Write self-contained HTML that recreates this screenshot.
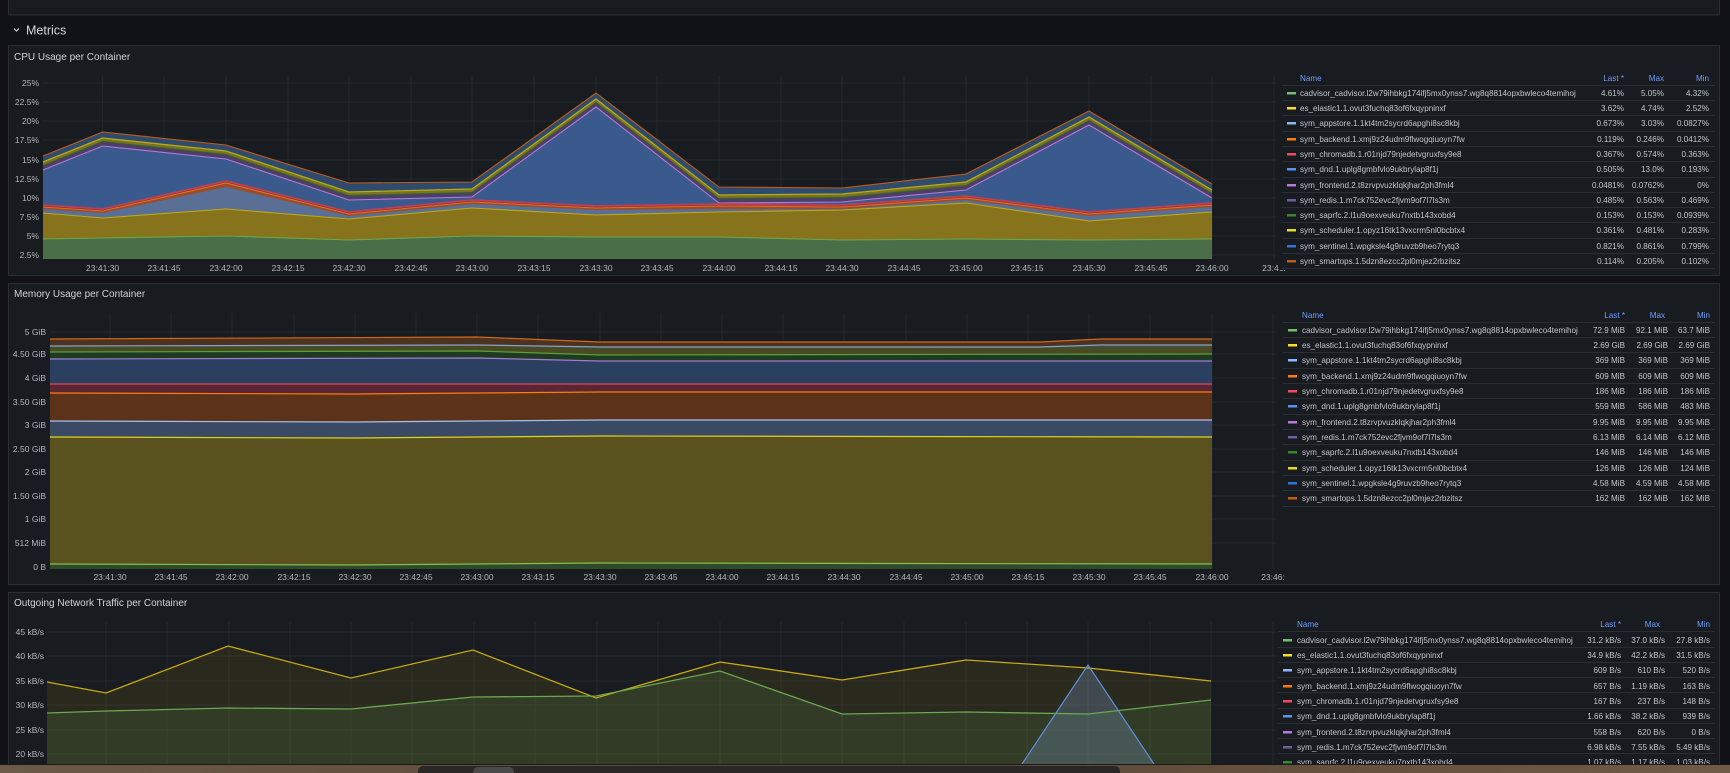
<!DOCTYPE html>
<html><head><meta charset="utf-8"><style>
html,body{margin:0;padding:0;background:#111217;overflow:hidden}
svg{display:block;font-family:"Liberation Sans",sans-serif}
.ax{font-size:8.5px;fill:#b4b6bd}
.lg{font-size:8.1px;fill:#c4c5cd}
.hd{font-size:8.1px;fill:#6e9fff}
.ti{font-size:10px;fill:#d0d1d8}
.g{stroke:#25282e;stroke-width:1}
.sep{stroke:#2a2d33;stroke-width:1}
</style></head><body>
<svg width="1730" height="773" viewBox="0 0 1730 773">
<rect width="1730" height="773" fill="#111217"/>
<rect x="8.5" y="-3" width="1711" height="18" fill="#181b1f" stroke="#2a2d33"/>
<path d="M14 28.5 L16.5 31 L19 28.5" fill="none" stroke="#c9cad2" stroke-width="1.2"/>
<text x="26" y="34.5" style="font-size:12.5px;fill:#d6d7de">Metrics</text>

<rect x="8.5" y="45.5" width="1711" height="230" fill="#181b1f" stroke="#2a2d33"/>
<text class="ti" x="14" y="60">CPU Usage per Container</text>
<g class="g">
<line x1="43" y1="83" x2="1276" y2="83"/><line x1="43" y1="102" x2="1276" y2="102"/><line x1="43" y1="121" x2="1276" y2="121"/><line x1="43" y1="140" x2="1276" y2="140"/><line x1="43" y1="160" x2="1276" y2="160"/><line x1="43" y1="179" x2="1276" y2="179"/><line x1="43" y1="198" x2="1276" y2="198"/><line x1="43" y1="217" x2="1276" y2="217"/><line x1="43" y1="236" x2="1276" y2="236"/><line x1="43" y1="255" x2="1276" y2="255"/>
<line x1="102.6" y1="76" x2="102.6" y2="259"/><line x1="164" y1="76" x2="164" y2="259"/><line x1="226" y1="76" x2="226" y2="259"/><line x1="288" y1="76" x2="288" y2="259"/><line x1="349" y1="76" x2="349" y2="259"/><line x1="411" y1="76" x2="411" y2="259"/><line x1="472" y1="76" x2="472" y2="259"/><line x1="534" y1="76" x2="534" y2="259"/><line x1="596" y1="76" x2="596" y2="259"/><line x1="657" y1="76" x2="657" y2="259"/><line x1="719" y1="76" x2="719" y2="259"/><line x1="781" y1="76" x2="781" y2="259"/><line x1="842" y1="76" x2="842" y2="259"/><line x1="904" y1="76" x2="904" y2="259"/><line x1="966" y1="76" x2="966" y2="259"/><line x1="1027" y1="76" x2="1027" y2="259"/><line x1="1089" y1="76" x2="1089" y2="259"/><line x1="1151" y1="76" x2="1151" y2="259"/><line x1="1212" y1="76" x2="1212" y2="259"/><line x1="1274" y1="76" x2="1274" y2="259"/>
</g>
<g>
<polygon fill="#2e4b6e" points="43,156 102.6,132 226,145 349,183 472,182 596,93 719,187 842,188 966,174 1089,111 1212,184 1212,259 43,259"/>
<polygon fill="#77731e" points="43,162 102.6,138 226,151 349,192 472,189 596,99 719,195 842,194 966,182 1089,117 1212,190 1212,259 43,259"/>
<polygon fill="#3b5e2c" points="43,165 102.6,141 226,154 349,195 472,192 596,102 719,198 842,197 966,185 1089,120 1212,193 1212,259 43,259"/>
<polygon fill="#4a3f68" points="43,166 102.6,142 226,155 349,196 472,193 596,103 719,199 842,198 966,186 1089,121 1212,194 1212,259 43,259"/>
<polygon fill="#3a5a8d" points="43,170 102.6,146 226,159 349,200 472,197 596,107 719,203 842,202 966,190 1089,125 1212,198 1212,259 43,259"/>
<polygon fill="#8a2d3b" points="43,205 102.6,209 226,181 349,212 472,200 596,206 719,204 842,205 966,196 1089,212 1212,203 1212,259 43,259"/>
<polygon fill="#9a4d2a" points="43,207 102.6,211 226,183 349,214 472,202 596,208 719,206 842,207 966,198 1089,214 1212,205 1212,259 43,259"/>
<polygon fill="#5a6f95" points="43,209 102.6,213 226,187 349,216 472,204 596,210 719,209 842,209 966,200 1089,216 1212,207 1212,259 43,259"/>
<polygon fill="#86731c" points="43,213 102.6,218 226,209 349,219 472,208 596,215 719,212 842,210 966,203 1089,221 1212,212 1212,259 43,259"/>
<polygon fill="#4a6e48" points="43,239 102.6,238 226,236 349,240 472,236 596,237 719,237 842,240 966,239 1089,240 1212,239 1212,259 43,259"/>
<g fill="none" stroke-width="1.1">
<polyline stroke="#c15c17" points="43,156 102.6,132 226,145 349,183 472,182 596,93 719,187 842,188 966,174 1089,111 1212,184"/>
<polyline stroke="#b8a91e" stroke-width="1.3" points="43,162 102.6,138 226,151 349,192 472,189 596,99 719,195 842,194 966,182 1089,117 1212,190"/>
<polyline stroke="#b877d9" points="43,170 102.6,146 226,159 349,200 472,197 596,107 719,203 842,202 966,190 1089,125 1212,198"/>
<polyline stroke="#c04050" stroke-width="1.8" points="43,205 102.6,209 226,181 349,212 472,200 596,206 719,204 842,205 966,196 1089,212 1212,203"/>
<polyline stroke="#e07020" points="43,207 102.6,211 226,183 349,214 472,202 596,208 719,206 842,207 966,198 1089,214 1212,205"/>
<polyline stroke="#c0a818" points="43,213 102.6,218 226,209 349,219 472,208 596,215 719,212 842,210 966,203 1089,221 1212,212"/>
<polyline stroke="#6aa84f" points="43,239 102.6,238 226,236 349,240 472,236 596,237 719,237 842,240 966,239 1089,240 1212,239"/>
</g></g>
<g class="ax" text-anchor="end">
<text x="39" y="86">25%</text><text x="39" y="105">22.5%</text><text x="39" y="124">20%</text><text x="39" y="143">17.5%</text><text x="39" y="163">15%</text><text x="39" y="182">12.5%</text><text x="39" y="201">10%</text><text x="39" y="220">7.5%</text><text x="39" y="239">5%</text><text x="39" y="258">2.5%</text>
</g>
<g class="ax" text-anchor="middle">
<text x="102.6" y="271">23:41:30</text><text x="164" y="271">23:41:45</text><text x="226" y="271">23:42:00</text><text x="288" y="271">23:42:15</text><text x="349" y="271">23:42:30</text><text x="411" y="271">23:42:45</text><text x="472" y="271">23:43:00</text><text x="534" y="271">23:43:15</text><text x="596" y="271">23:43:30</text><text x="657" y="271">23:43:45</text><text x="719" y="271">23:44:00</text><text x="781" y="271">23:44:15</text><text x="842" y="271">23:44:30</text><text x="904" y="271">23:44:45</text><text x="966" y="271">23:45:00</text><text x="1027" y="271">23:45:15</text><text x="1089" y="271">23:45:30</text><text x="1151" y="271">23:45:45</text><text x="1212" y="271">23:46:00</text><text x="1274" y="271">23:46:</text>
</g>
<rect x="1279" y="70" width="438" height="200" fill="#181b1f"/>
<g>
<text class="hd" x="1300" y="81">Name</text>
<g class="hd" text-anchor="end"><text x="1624" y="81">Last *</text><text x="1664" y="81">Max</text><text x="1709" y="81">Min</text></g>
<g class="sep"><line x1="1282" y1="85.5" x2="1715" y2="85.5"/><line x1="1282" y1="100.5" x2="1715" y2="100.5"/><line x1="1282" y1="115.5" x2="1715" y2="115.5"/><line x1="1282" y1="131.5" x2="1715" y2="131.5"/><line x1="1282" y1="146.5" x2="1715" y2="146.5"/><line x1="1282" y1="161.5" x2="1715" y2="161.5"/><line x1="1282" y1="177.5" x2="1715" y2="177.5"/><line x1="1282" y1="192.5" x2="1715" y2="192.5"/><line x1="1282" y1="207.5" x2="1715" y2="207.5"/><line x1="1282" y1="222.5" x2="1715" y2="222.5"/><line x1="1282" y1="238.5" x2="1715" y2="238.5"/><line x1="1282" y1="253.5" x2="1715" y2="253.5"/><line x1="1282" y1="268.5" x2="1715" y2="268.5"/></g>
<g>
<rect x="1287" y="92" width="9" height="2.5" fill="#73bf69"/><rect x="1287" y="107" width="9" height="2.5" fill="#fade2a"/><rect x="1287" y="122" width="9" height="2.5" fill="#8ab8ff"/><rect x="1287" y="138" width="9" height="2.5" fill="#ff780a"/><rect x="1287" y="153" width="9" height="2.5" fill="#f2495c"/><rect x="1287" y="168" width="9" height="2.5" fill="#5794f2"/><rect x="1287" y="184" width="9" height="2.5" fill="#b877d9"/><rect x="1287" y="199" width="9" height="2.5" fill="#705da0"/><rect x="1287" y="214" width="9" height="2.5" fill="#37872d"/><rect x="1287" y="229" width="9" height="2.5" fill="#e8dc22"/><rect x="1287" y="245" width="9" height="2.5" fill="#3274d9"/><rect x="1287" y="260" width="9" height="2.5" fill="#c15c17"/>
</g>
<g class="lg">
<text x="1300" y="96">cadvisor_cadvisor.l2w79ihbkg174ifj5mx0ynss7.wg8q8814opxbwleco4temihoj</text>
<text x="1300" y="111">es_elastic1.1.ovut3fuchq83of6fxqypninxf</text>
<text x="1300" y="126">sym_appstore.1.1kt4tm2sycrd6apghi8sc8kbj</text>
<text x="1300" y="142">sym_backend.1.xmj9z24udm9flwogqiuoyn7fw</text>
<text x="1300" y="157">sym_chromadb.1.r01njd79njedetvgruxfsy9e8</text>
<text x="1300" y="172">sym_dnd.1.uplg8gmbfvlo9ukbrylap8f1j</text>
<text x="1300" y="188">sym_frontend.2.t8zrvpvuzklqkjhar2ph3fml4</text>
<text x="1300" y="203">sym_redis.1.m7ck752evc2fjvm9of7l7ls3m</text>
<text x="1300" y="218">sym_saprfc.2.l1u9oexveuku7nxtb143xobd4</text>
<text x="1300" y="233">sym_scheduler.1.opyz16tk13vxcrm5nl0bcbtx4</text>
<text x="1300" y="249">sym_sentinel.1.wpgksle4g9ruvzb9heo7rytq3</text>
<text x="1300" y="264">sym_smartops.1.5dzn8ezcc2pl0mjez2rbzitsz</text>
</g>
<g class="lg" text-anchor="end">
<text x="1624" y="96">4.61%</text><text x="1664" y="96">5.05%</text><text x="1709" y="96">4.32%</text>
<text x="1624" y="111">3.62%</text><text x="1664" y="111">4.74%</text><text x="1709" y="111">2.52%</text>
<text x="1624" y="126">0.673%</text><text x="1664" y="126">3.03%</text><text x="1709" y="126">0.0827%</text>
<text x="1624" y="142">0.119%</text><text x="1664" y="142">0.246%</text><text x="1709" y="142">0.0412%</text>
<text x="1624" y="157">0.367%</text><text x="1664" y="157">0.574%</text><text x="1709" y="157">0.363%</text>
<text x="1624" y="172">0.505%</text><text x="1664" y="172">13.0%</text><text x="1709" y="172">0.193%</text>
<text x="1624" y="188">0.0481%</text><text x="1664" y="188">0.0762%</text><text x="1709" y="188">0%</text>
<text x="1624" y="203">0.485%</text><text x="1664" y="203">0.563%</text><text x="1709" y="203">0.469%</text>
<text x="1624" y="218">0.153%</text><text x="1664" y="218">0.153%</text><text x="1709" y="218">0.0939%</text>
<text x="1624" y="233">0.361%</text><text x="1664" y="233">0.481%</text><text x="1709" y="233">0.283%</text>
<text x="1624" y="249">0.821%</text><text x="1664" y="249">0.861%</text><text x="1709" y="249">0.799%</text>
<text x="1624" y="264">0.114%</text><text x="1664" y="264">0.205%</text><text x="1709" y="264">0.102%</text>
</g>
</g>

<rect x="8.5" y="283.5" width="1711" height="301" fill="#181b1f" stroke="#2a2d33"/>
<text class="ti" x="14" y="297">Memory Usage per Container</text>
<g class="g">
<line x1="50" y1="332" x2="1276" y2="332"/><line x1="50" y1="354" x2="1276" y2="354"/><line x1="50" y1="378" x2="1276" y2="378"/><line x1="50" y1="402" x2="1276" y2="402"/><line x1="50" y1="425" x2="1276" y2="425"/><line x1="50" y1="449" x2="1276" y2="449"/><line x1="50" y1="472" x2="1276" y2="472"/><line x1="50" y1="496" x2="1276" y2="496"/><line x1="50" y1="519" x2="1276" y2="519"/><line x1="50" y1="543" x2="1276" y2="543"/>
<line x1="110" y1="313" x2="110" y2="569"/><line x1="171" y1="313" x2="171" y2="569"/><line x1="232" y1="313" x2="232" y2="569"/><line x1="294" y1="313" x2="294" y2="569"/><line x1="355" y1="313" x2="355" y2="569"/><line x1="416" y1="313" x2="416" y2="569"/><line x1="477" y1="313" x2="477" y2="569"/><line x1="538" y1="313" x2="538" y2="569"/><line x1="600" y1="313" x2="600" y2="569"/><line x1="661" y1="313" x2="661" y2="569"/><line x1="722" y1="313" x2="722" y2="569"/><line x1="783" y1="313" x2="783" y2="569"/><line x1="844" y1="313" x2="844" y2="569"/><line x1="906" y1="313" x2="906" y2="569"/><line x1="967" y1="313" x2="967" y2="569"/><line x1="1028" y1="313" x2="1028" y2="569"/><line x1="1089" y1="313" x2="1089" y2="569"/><line x1="1150" y1="313" x2="1150" y2="569"/><line x1="1212" y1="313" x2="1212" y2="569"/><line x1="1273" y1="313" x2="1273" y2="569"/>
</g>
<g>
<polygon fill="#4e3220" points="50,339 477,337 600,342 1040,342 1100,339 1212,339 1212,569 50,569"/>
<polygon fill="#3c4e3e" points="50,346 477,345 600,347 1040,347 1100,345 1212,345 1212,569 50,569"/>
<polygon fill="#4a4a22" points="50,348 477,346 600,349 1212,348 1212,569 50,569"/>
<polygon fill="#1f3a22" points="50,352 477,351 600,355 1212,354 1212,569 50,569"/>
<polygon fill="#2b3f60" points="50,359 477,358 600,361 1212,361 1212,569 50,569"/>
<polygon fill="#5a2633" points="50,384 477,384 600,384 1212,384 1212,569 50,569"/>
<polygon fill="#5c3218" points="50,393 355,394 477,393 600,392 1212,392 1212,569 50,569"/>
<polygon fill="#3a4a64" points="50,421 355,422 477,421 600,420 1212,420 1212,569 50,569"/>
<polygon fill="#5a521e" points="50,437 355,438 477,437 600,436 1212,437 1212,569 50,569"/>
<polygon fill="#2f4a2a" points="50,564 355,565 477,564 600,563 1212,564 1212,569 50,569"/>
<g fill="none" stroke-width="1.2">
<polyline stroke="#d0681c" points="50,339 477,337 600,342 1040,342 1100,339 1212,339"/>
<polyline stroke="#8aa0c0" points="50,346 477,345 600,347 1040,347 1100,345 1212,345"/>
<polyline stroke="#5aa03a" points="50,352 477,351 600,355 1212,354"/>
<polyline stroke="#a27ad0" points="50,359 477,358 600,361 1212,361"/>
<polyline stroke="#e0485a" points="50,384 477,384 600,384 1212,384"/>
<polyline stroke="#ff7a10" points="50,393 355,394 477,393 600,392 1212,392"/>
<polyline stroke="#a8c0e8" points="50,421 355,422 477,421 600,420 1212,420"/>
<polyline stroke="#e0d020" points="50,437 355,438 477,437 600,436 1212,437"/>
<polyline stroke="#80c050" points="50,564 355,565 477,564 600,563 1212,564"/>
</g></g>
<g class="ax" text-anchor="end">
<text x="46" y="335">5 GiB</text><text x="46" y="357">4.50 GiB</text><text x="46" y="381">4 GiB</text><text x="46" y="405">3.50 GiB</text><text x="46" y="428">3 GiB</text><text x="46" y="452">2.50 GiB</text><text x="46" y="475">2 GiB</text><text x="46" y="499">1.50 GiB</text><text x="46" y="522">1 GiB</text><text x="46" y="546">512 MiB</text><text x="46" y="570">0 B</text>
</g>
<g class="ax" text-anchor="middle">
<text x="110" y="580">23:41:30</text><text x="171" y="580">23:41:45</text><text x="232" y="580">23:42:00</text><text x="294" y="580">23:42:15</text><text x="355" y="580">23:42:30</text><text x="416" y="580">23:42:45</text><text x="477" y="580">23:43:00</text><text x="538" y="580">23:43:15</text><text x="600" y="580">23:43:30</text><text x="661" y="580">23:43:45</text><text x="722" y="580">23:44:00</text><text x="783" y="580">23:44:15</text><text x="844" y="580">23:44:30</text><text x="906" y="580">23:44:45</text><text x="967" y="580">23:45:00</text><text x="1028" y="580">23:45:15</text><text x="1089" y="580">23:45:30</text><text x="1150" y="580">23:45:45</text><text x="1212" y="580">23:46:00</text><text x="1273" y="580">23:46:</text>
</g>
<rect x="1281" y="305" width="436" height="210" fill="#181b1f"/>
<g>
<text class="hd" x="1302" y="318">Name</text>
<g class="hd" text-anchor="end"><text x="1625" y="318">Last *</text><text x="1665" y="318">Max</text><text x="1710" y="318">Min</text></g>
<g class="sep"><line x1="1283" y1="322.5" x2="1715" y2="322.5"/><line x1="1283" y1="337.5" x2="1715" y2="337.5"/><line x1="1283" y1="352.5" x2="1715" y2="352.5"/><line x1="1283" y1="368.5" x2="1715" y2="368.5"/><line x1="1283" y1="383.5" x2="1715" y2="383.5"/><line x1="1283" y1="398.5" x2="1715" y2="398.5"/><line x1="1283" y1="414.5" x2="1715" y2="414.5"/><line x1="1283" y1="429.5" x2="1715" y2="429.5"/><line x1="1283" y1="444.5" x2="1715" y2="444.5"/><line x1="1283" y1="460.5" x2="1715" y2="460.5"/><line x1="1283" y1="475.5" x2="1715" y2="475.5"/><line x1="1283" y1="490.5" x2="1715" y2="490.5"/><line x1="1283" y1="506.5" x2="1715" y2="506.5"/></g>
<g>
<rect x="1288" y="329" width="9" height="2.5" fill="#73bf69"/><rect x="1288" y="344" width="9" height="2.5" fill="#fade2a"/><rect x="1288" y="359" width="9" height="2.5" fill="#8ab8ff"/><rect x="1288" y="375" width="9" height="2.5" fill="#ff780a"/><rect x="1288" y="390" width="9" height="2.5" fill="#f2495c"/><rect x="1288" y="405" width="9" height="2.5" fill="#5794f2"/><rect x="1288" y="421" width="9" height="2.5" fill="#b877d9"/><rect x="1288" y="436" width="9" height="2.5" fill="#705da0"/><rect x="1288" y="451" width="9" height="2.5" fill="#37872d"/><rect x="1288" y="467" width="9" height="2.5" fill="#e8dc22"/><rect x="1288" y="482" width="9" height="2.5" fill="#3274d9"/><rect x="1288" y="497" width="9" height="2.5" fill="#c15c17"/>
</g>
<g class="lg">
<text x="1302" y="333">cadvisor_cadvisor.l2w79ihbkg174ifj5mx0ynss7.wg8q8814opxbwleco4temihoj</text>
<text x="1302" y="348">es_elastic1.1.ovut3fuchq83of6fxqypninxf</text>
<text x="1302" y="363">sym_appstore.1.1kt4tm2sycrd6apghi8sc8kbj</text>
<text x="1302" y="379">sym_backend.1.xmj9z24udm9flwogqiuoyn7fw</text>
<text x="1302" y="394">sym_chromadb.1.r01njd79njedetvgruxfsy9e8</text>
<text x="1302" y="409">sym_dnd.1.uplg8gmbfvlo9ukbrylap8f1j</text>
<text x="1302" y="425">sym_frontend.2.t8zrvpvuzklqkjhar2ph3fml4</text>
<text x="1302" y="440">sym_redis.1.m7ck752evc2fjvm9of7l7ls3m</text>
<text x="1302" y="455">sym_saprfc.2.l1u9oexveuku7nxtb143xobd4</text>
<text x="1302" y="471">sym_scheduler.1.opyz16tk13vxcrm5nl0bcbtx4</text>
<text x="1302" y="486">sym_sentinel.1.wpgksle4g9ruvzb9heo7rytq3</text>
<text x="1302" y="501">sym_smartops.1.5dzn8ezcc2pl0mjez2rbzitsz</text>
</g>
<g class="lg" text-anchor="end">
<text x="1625" y="333">72.9 MiB</text><text x="1668" y="333">92.1 MiB</text><text x="1710" y="333">63.7 MiB</text>
<text x="1625" y="348">2.69 GiB</text><text x="1668" y="348">2.69 GiB</text><text x="1710" y="348">2.69 GiB</text>
<text x="1625" y="363">369 MiB</text><text x="1668" y="363">369 MiB</text><text x="1710" y="363">369 MiB</text>
<text x="1625" y="379">609 MiB</text><text x="1668" y="379">609 MiB</text><text x="1710" y="379">609 MiB</text>
<text x="1625" y="394">186 MiB</text><text x="1668" y="394">186 MiB</text><text x="1710" y="394">186 MiB</text>
<text x="1625" y="409">559 MiB</text><text x="1668" y="409">586 MiB</text><text x="1710" y="409">483 MiB</text>
<text x="1625" y="425">9.95 MiB</text><text x="1668" y="425">9.95 MiB</text><text x="1710" y="425">9.95 MiB</text>
<text x="1625" y="440">6.13 MiB</text><text x="1668" y="440">6.14 MiB</text><text x="1710" y="440">6.12 MiB</text>
<text x="1625" y="455">146 MiB</text><text x="1668" y="455">146 MiB</text><text x="1710" y="455">146 MiB</text>
<text x="1625" y="471">126 MiB</text><text x="1668" y="471">126 MiB</text><text x="1710" y="471">124 MiB</text>
<text x="1625" y="486">4.58 MiB</text><text x="1668" y="486">4.59 MiB</text><text x="1710" y="486">4.58 MiB</text>
<text x="1625" y="501">162 MiB</text><text x="1668" y="501">162 MiB</text><text x="1710" y="501">162 MiB</text>
</g>
</g>

<rect x="8.5" y="592.5" width="1711" height="200" fill="#181b1f" stroke="#2a2d33"/>
<text class="ti" x="14" y="606">Outgoing Network Traffic per Container</text>
<g class="g">
<line x1="47" y1="632" x2="1276" y2="632"/><line x1="47" y1="656" x2="1276" y2="656"/><line x1="47" y1="681" x2="1276" y2="681"/><line x1="47" y1="705" x2="1276" y2="705"/><line x1="47" y1="730" x2="1276" y2="730"/><line x1="47" y1="754" x2="1276" y2="754"/>
<line x1="106" y1="622" x2="106" y2="764"/><line x1="167" y1="622" x2="167" y2="764"/><line x1="229" y1="622" x2="229" y2="764"/><line x1="290" y1="622" x2="290" y2="764"/><line x1="351" y1="622" x2="351" y2="764"/><line x1="412" y1="622" x2="412" y2="764"/><line x1="474" y1="622" x2="474" y2="764"/><line x1="535" y1="622" x2="535" y2="764"/><line x1="597" y1="622" x2="597" y2="764"/><line x1="658" y1="622" x2="658" y2="764"/><line x1="720" y1="622" x2="720" y2="764"/><line x1="781" y1="622" x2="781" y2="764"/><line x1="842" y1="622" x2="842" y2="764"/><line x1="904" y1="622" x2="904" y2="764"/><line x1="966" y1="622" x2="966" y2="764"/><line x1="1027" y1="622" x2="1027" y2="764"/><line x1="1088" y1="622" x2="1088" y2="764"/><line x1="1150" y1="622" x2="1150" y2="764"/><line x1="1211" y1="622" x2="1211" y2="764"/><line x1="1273" y1="622" x2="1273" y2="764"/>
</g>
<polygon fill="rgba(200,170,20,0.1)" points="47,682 106,693 228,646 351,678 473,650 596,698 720,662 842,680 966,660 1088,668 1211,681 1211,764 47,764"/>
<polygon fill="rgba(115,191,105,0.12)" points="47,713 106,711 228,708 351,709 473,697 596,696 720,671 842,714 966,712 1088,714 1211,700 1211,764 47,764"/>
<polygon fill="rgba(120,150,190,0.3)" points="1022,764 1088,665 1154,764"/>
<polyline fill="none" stroke="#c9a916" stroke-width="1.3" points="47,682 106,693 228,646 351,678 473,650 596,698 720,662 842,680 966,660 1088,668 1211,681"/>
<polyline fill="none" stroke="#6aa84f" stroke-width="1.3" points="47,713 106,711 228,708 351,709 473,697 596,696 720,671 842,714 966,712 1088,714 1211,700"/>
<polyline fill="none" stroke="#5b8fd8" stroke-width="1.2" points="1022,764 1088,665 1154,764"/>
<g class="ax" text-anchor="end">
<text x="44" y="635">45 kB/s</text><text x="44" y="659">40 kB/s</text><text x="44" y="684">35 kB/s</text><text x="44" y="708">30 kB/s</text><text x="44" y="733">25 kB/s</text><text x="44" y="757">20 kB/s</text>
</g>
<rect x="1276" y="615" width="441" height="150" fill="#181b1f"/>
<g>
<text class="hd" x="1297" y="627">Name</text>
<g class="hd" text-anchor="end"><text x="1621" y="627">Last *</text><text x="1660" y="627">Max</text><text x="1710" y="627">Min</text></g>
<g class="sep"><line x1="1278" y1="631.5" x2="1715" y2="631.5"/><line x1="1278" y1="647.5" x2="1715" y2="647.5"/><line x1="1278" y1="662.5" x2="1715" y2="662.5"/><line x1="1278" y1="677.5" x2="1715" y2="677.5"/><line x1="1278" y1="692.5" x2="1715" y2="692.5"/><line x1="1278" y1="708.5" x2="1715" y2="708.5"/><line x1="1278" y1="723.5" x2="1715" y2="723.5"/><line x1="1278" y1="738.5" x2="1715" y2="738.5"/><line x1="1278" y1="753.5" x2="1715" y2="753.5"/></g>
<g>
<rect x="1283" y="639" width="9" height="2.5" fill="#73bf69"/><rect x="1283" y="654" width="9" height="2.5" fill="#fade2a"/><rect x="1283" y="669" width="9" height="2.5" fill="#8ab8ff"/><rect x="1283" y="685" width="9" height="2.5" fill="#ff780a"/><rect x="1283" y="700" width="9" height="2.5" fill="#f2495c"/><rect x="1283" y="715" width="9" height="2.5" fill="#5794f2"/><rect x="1283" y="731" width="9" height="2.5" fill="#b877d9"/><rect x="1283" y="746" width="9" height="2.5" fill="#705da0"/><rect x="1283" y="761" width="9" height="2.5" fill="#37872d"/>
</g>
<g class="lg">
<text x="1297" y="643">cadvisor_cadvisor.l2w79ihbkg174ifj5mx0ynss7.wg8q8814opxbwleco4temihoj</text>
<text x="1297" y="658">es_elastic1.1.ovut3fuchq83of6fxqypninxf</text>
<text x="1297" y="673">sym_appstore.1.1kt4tm2sycrd6apghi8sc8kbj</text>
<text x="1297" y="689">sym_backend.1.xmj9z24udm9flwogqiuoyn7fw</text>
<text x="1297" y="704">sym_chromadb.1.r01njd79njedetvgruxfsy9e8</text>
<text x="1297" y="719">sym_dnd.1.uplg8gmbfvlo9ukbrylap8f1j</text>
<text x="1297" y="735">sym_frontend.2.t8zrvpvuzklqkjhar2ph3fml4</text>
<text x="1297" y="750">sym_redis.1.m7ck752evc2fjvm9of7l7ls3m</text>
<text x="1297" y="765">sym_saprfc.2.l1u9oexveuku7nxtb143xobd4</text>
</g>
<g class="lg" text-anchor="end">
<text x="1621" y="643">31.2 kB/s</text><text x="1665" y="643">37.0 kB/s</text><text x="1710" y="643">27.8 kB/s</text>
<text x="1621" y="658">34.9 kB/s</text><text x="1665" y="658">42.2 kB/s</text><text x="1710" y="658">31.5 kB/s</text>
<text x="1621" y="673">609 B/s</text><text x="1665" y="673">610 B/s</text><text x="1710" y="673">520 B/s</text>
<text x="1621" y="689">657 B/s</text><text x="1665" y="689">1.19 kB/s</text><text x="1710" y="689">163 B/s</text>
<text x="1621" y="704">167 B/s</text><text x="1665" y="704">237 B/s</text><text x="1710" y="704">148 B/s</text>
<text x="1621" y="719">1.66 kB/s</text><text x="1665" y="719">38.2 kB/s</text><text x="1710" y="719">939 B/s</text>
<text x="1621" y="735">558 B/s</text><text x="1665" y="735">620 B/s</text><text x="1710" y="735">0 B/s</text>
<text x="1621" y="750">6.98 kB/s</text><text x="1665" y="750">7.55 kB/s</text><text x="1710" y="750">5.49 kB/s</text>
<text x="1621" y="765">1.07 kB/s</text><text x="1665" y="765">1.17 kB/s</text><text x="1710" y="765">1.03 kB/s</text>
</g>
</g>

<defs><linearGradient id="br" x1="0" x2="1" y1="0" y2="0"><stop offset="0" stop-color="#6b5a48"/><stop offset="0.5" stop-color="#5c4636"/><stop offset="1" stop-color="#6e5a46"/></linearGradient></defs>
<rect x="0" y="764" width="1730" height="9" fill="url(#br)"/>
<line x1="0" y1="764.5" x2="1730" y2="764.5" stroke="#1a1a1a"/>
<rect x="418" y="766" width="702" height="12" rx="5" fill="#2a2827"/>
<rect x="473" y="767" width="41" height="12" rx="5" fill="#4a4a4a"/>
</svg>
</body></html>
